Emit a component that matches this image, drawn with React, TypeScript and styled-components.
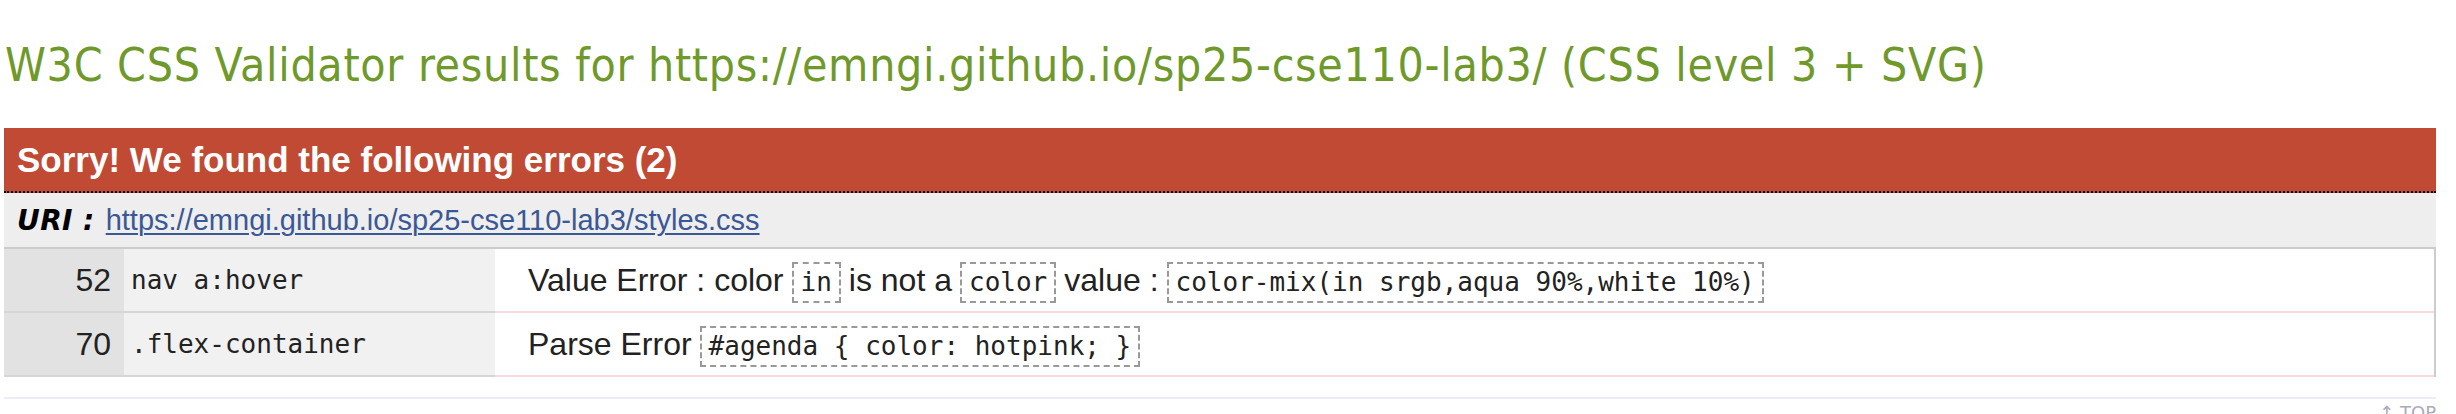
import styled, { createGlobalStyle } from 'styled-components';

const GlobalStyle = createGlobalStyle`
  html, body {
    margin: 0;
    padding: 0;
    background: #fff;
  }
`;

const Page = styled.div`
  width: 2456px;
  height: 414px;
  overflow: hidden;
  padding: 0 20px 0 4px;
  box-sizing: border-box;
`;

const Title = styled.h2`
  margin: 38px 0 0 1px;
  height: 90px;
  font-family: 'DejaVu Sans Condensed', 'DejaVu Sans', sans-serif;
  font-stretch: condensed;
  font-weight: normal;
  font-size: 46px;
  letter-spacing: 0.7px;
  line-height: 54px;
  color: #6f9a2b;
  white-space: nowrap;
`;

const ErrorHead = styled.div`
  height: 63px;
  line-height: 63px;
  padding-left: 13px;
  background: #c04a33;
  border-bottom: 2px dotted #000;
  color: #fff;
  font-family: 'Liberation Sans', Arial, sans-serif;
  font-weight: bold;
  font-size: 35px;
`;

const UriRow = styled.div`
  display: flex;
  align-items: baseline;
  gap: 11px;
  height: 54px;
  line-height: 54px;
  padding-left: 13px;
  background: #eee;
  border-bottom: 2px solid #ccc;
`;

const UriLabel = styled.span`
  font-family: 'DejaVu Sans', Verdana, sans-serif;
  font-weight: bold;
  font-style: italic;
  font-size: 28px;
  letter-spacing: 0.4px;
  color: #000;
`;

const UriLink = styled.a`
  font-family: 'Liberation Sans', Arial, sans-serif;
  font-size: 29px;
  color: #3a5895;
  text-decoration: underline;
  text-decoration-thickness: 2px;
  text-underline-offset: 3px;
`;

const ErrorTable = styled.div`
  border-right: 2px solid #ccc;
`;

const ErrorRow = styled.div`
  display: grid;
  grid-template-columns: 120px 371px 1fr;
  height: 64px;
  line-height: 62px;
`;

const LineCell = styled.div`
  background: #e2e2e2;
  border-bottom: 2px solid #d6d6d6;
  padding-right: 13px;
  text-align: right;
  font-family: 'Liberation Sans', Arial, sans-serif;
  font-size: 32px;
  color: #222;
`;

const SelectorCell = styled.div`
  background: #f1f1f1;
  border-bottom: 2px solid #d6d6d6;
  padding-left: 7px;
  font-family: 'DejaVu Sans Mono', monospace;
  font-size: 26px;
  color: #222;
`;

const MessageCell = styled.div`
  background: #fff;
  border-bottom: 2px solid #f6dddd;
  padding-left: 33px;
  font-family: 'Liberation Sans', Arial, sans-serif;
  font-size: 32px;
  color: #222;
  white-space: nowrap;
`;

const Code = styled.code`
  display: inline-block;
  line-height: 37px;
  padding: 0 7px;
  margin: 0 8px;
  border: 2px dashed #999;
  font-family: 'DejaVu Sans Mono', monospace;
  font-size: 26px;
  color: #222;
`;

const Footer = styled.div`
  margin-top: 20px;
  border-top: 2px solid #ececfb;
  padding-top: 4px;
  text-align: right;
  font-family: 'DejaVu Sans', Verdana, sans-serif;
  font-size: 18px;
  line-height: 20px;
  color: #aab;
`;

const errors = [
  {
    line: 52,
    selector: 'nav a:hover',
    message: (
      <>
        Value Error : color<Code>in</Code>is not a<Code>color</Code>value :
        <Code>color-mix(in srgb,aqua 90%,white 10%)</Code>
      </>
    ),
  },
  {
    line: 70,
    selector: '.flex-container',
    message: (
      <>
        Parse Error<Code>#agenda {'{'} color: hotpink; {'}'}</Code>
      </>
    ),
  },
];

export default function App() {
  return (
    <>
      <GlobalStyle />
      <Page>
        <Title>
          W3C CSS Validator results for https://emngi.github.io/sp25-cse110-lab3/ (CSS level 3 + SVG)
        </Title>
        <ErrorHead>Sorry! We found the following errors (2)</ErrorHead>
        <UriRow>
          <UriLabel>URI :</UriLabel>
          <UriLink href="#">https://emngi.github.io/sp25-cse110-lab3/styles.css</UriLink>
        </UriRow>
        <ErrorTable>
          {errors.map((err) => (
            <ErrorRow key={err.line}>
              <LineCell>{err.line}</LineCell>
              <SelectorCell>{err.selector}</SelectorCell>
              <MessageCell>{err.message}</MessageCell>
            </ErrorRow>
          ))}
        </ErrorTable>
        <Footer>↑ TOP</Footer>
      </Page>
    </>
  );
}
